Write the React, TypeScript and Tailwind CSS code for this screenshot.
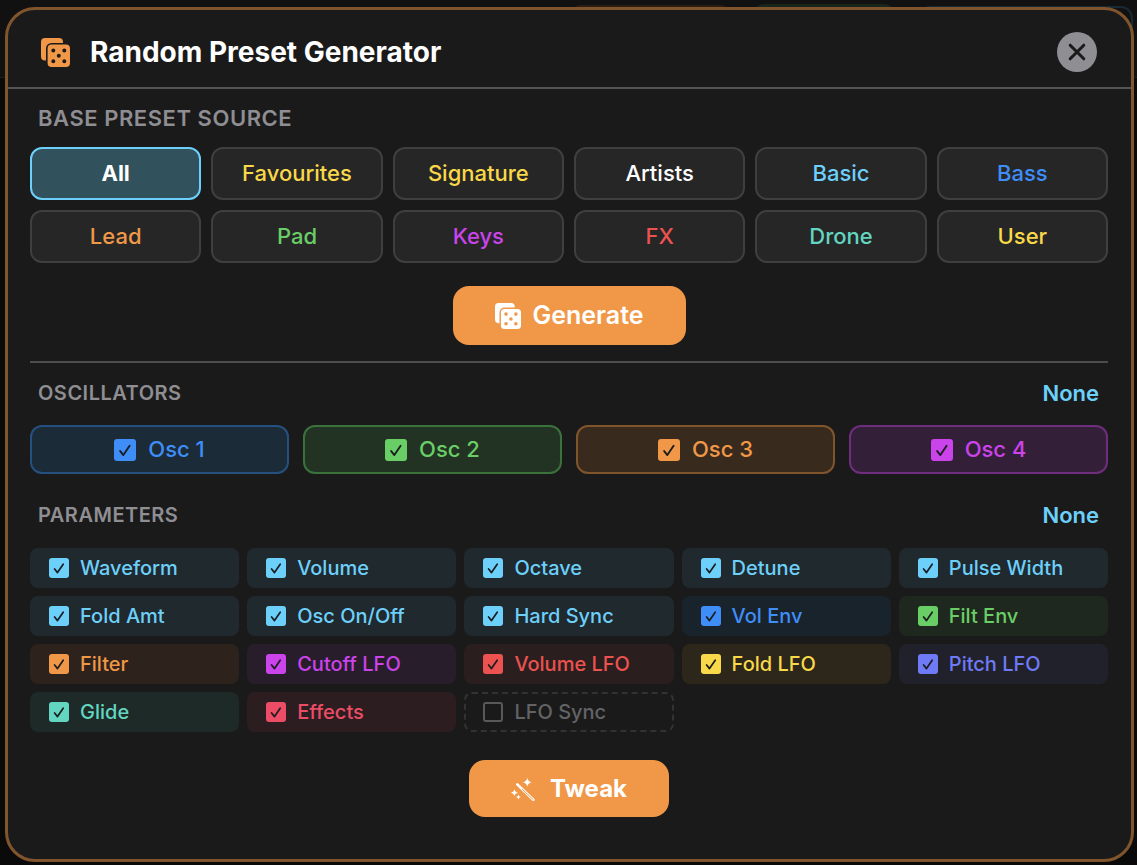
import React, { useState } from 'react';
import clsx from 'clsx';

interface Category {
  name: string;
  color: string;
}

interface Option {
  name: string;
  text: string;
  check: string;
  box: string;
}

const categories: Category[] = [
  { name: 'All', color: 'text-white' },
  { name: 'Favourites', color: 'text-[#f9d849]' },
  { name: 'Signature', color: 'text-[#f9d849]' },
  { name: 'Artists', color: 'text-white' },
  { name: 'Basic', color: 'text-[#6dd0fa]' },
  { name: 'Bass', color: 'text-[#3f8ef7]' },
  { name: 'Lead', color: 'text-[#f09848]' },
  { name: 'Pad', color: 'text-[#6ace66]' },
  { name: 'Keys', color: 'text-[#cb43ea]' },
  { name: 'FX', color: 'text-[#ec524f]' },
  { name: 'Drone', color: 'text-[#63d6c1]' },
  { name: 'User', color: 'text-[#f9d849]' },
];

const oscillators: Option[] = [
  { name: 'Osc 1', text: 'text-[#3f8ef7]', check: 'checked:bg-[#3f8ef7]', box: 'bg-[#1b2b38] border-[#26507f]' },
  { name: 'Osc 2', text: 'text-[#6ace66]', check: 'checked:bg-[#6ace66]', box: 'bg-[#223324] border-[#3b723c]' },
  { name: 'Osc 3', text: 'text-[#f09848]', check: 'checked:bg-[#f09848]', box: 'bg-[#392a1e] border-[#80552b]' },
  { name: 'Osc 4', text: 'text-[#cb43ea]', check: 'checked:bg-[#cb43ea]', box: 'bg-[#341f38] border-[#6e2d7d]' },
];

const cyan = { text: 'text-[#6dd0fa]', check: 'checked:bg-[#6dd0fa]', box: 'bg-[#20292e]' };

const parameters: Option[] = [
  { name: 'Waveform', ...cyan },
  { name: 'Volume', ...cyan },
  { name: 'Octave', ...cyan },
  { name: 'Detune', ...cyan },
  { name: 'Pulse Width', ...cyan },
  { name: 'Fold Amt', ...cyan },
  { name: 'Osc On/Off', ...cyan },
  { name: 'Hard Sync', ...cyan },
  { name: 'Vol Env', text: 'text-[#3f8ef7]', check: 'checked:bg-[#3f8ef7]', box: 'bg-[#19232c]' },
  { name: 'Filt Env', text: 'text-[#6ace66]', check: 'checked:bg-[#6ace66]', box: 'bg-[#1f281f]' },
  { name: 'Filter', text: 'text-[#f09848]', check: 'checked:bg-[#f09848]', box: 'bg-[#2d231c]' },
  { name: 'Cutoff LFO', text: 'text-[#cb43ea]', check: 'checked:bg-[#cb43ea]', box: 'bg-[#281d2b]' },
  { name: 'Volume LFO', text: 'text-[#ec524f]', check: 'checked:bg-[#ec524f]', box: 'bg-[#2b1e1e]' },
  { name: 'Fold LFO', text: 'text-[#f9d849]', check: 'checked:bg-[#f9d849]', box: 'bg-[#2c271a]' },
  { name: 'Pitch LFO', text: 'text-[#6f7af6]', check: 'checked:bg-[#6f7af6]', box: 'bg-[#21212b]' },
  { name: 'Glide', text: 'text-[#63d6c1]', check: 'checked:bg-[#63d6c1]', box: 'bg-[#1d2a27]' },
  { name: 'Effects', text: 'text-[#ec4c66]', check: 'checked:bg-[#ec4c66]', box: 'bg-[#2b1d20]' },
  { name: 'LFO Sync', ...cyan },
];

const DiceIcon: React.FC<{ className: string }> = ({ className }) => (
  <svg viewBox="0 0 29 29" className={className} fill="currentColor" aria-hidden="true">
    <path d="M4 0H18A4 4 0 0 1 22 4V5H10.5A5.5 5.5 0 0 0 5 10.5V22.5H4A4 4 0 0 1 0 18.5V4A4 4 0 0 1 4 0Z" />
    <path
      fillRule="evenodd"
      d="M10.6 6.6H25A4 4 0 0 1 29 10.6V25A4 4 0 0 1 25 29H10.6A4 4 0 0 1 6.6 25V10.6A4 4 0 0 1 10.6 6.6Z
        M10.3 12.4a2 2 0 1 0 4 0a2 2 0 1 0 -4 0Z
        M21.3 12.4a2 2 0 1 0 4 0a2 2 0 1 0 -4 0Z
        M15.8 17.8a2 2 0 1 0 4 0a2 2 0 1 0 -4 0Z
        M10.3 23.2a2 2 0 1 0 4 0a2 2 0 1 0 -4 0Z
        M21.3 23.2a2 2 0 1 0 4 0a2 2 0 1 0 -4 0Z"
    />
  </svg>
);

const WandIcon: React.FC = () => (
  <svg viewBox="0 0 24 24" className="size-6 overflow-visible" fill="currentColor" aria-hidden="true">
    <path d="M16.3 .8Q16.9 4.7 20.8 5.3Q16.9 5.9 16.3 9.8Q15.7 5.9 11.8 5.3Q15.7 4.7 16.3 .8Z" />
    <path d="M3.4 12Q3.9 15.2 7 15.7Q3.9 16.2 3.4 19.4Q2.9 16.2 -.2 15.7Q2.9 15.2 3.4 12Z" />
    <path d="M7.4 17.6Q7.7 19.7 9.8 20Q7.7 20.3 7.4 22.4Q7.1 20.3 5 20Q7.1 19.7 7.4 17.6Z" />
    <path d="M6.3 7.4L22.3 22.8" stroke="currentColor" strokeWidth="2.7" strokeLinecap="round" />
    <path d="M11.5 12.4L22.1 22.6" stroke="#f09848" strokeWidth="1" strokeLinecap="round" />
  </svg>
);

const Checkbox: React.FC<{
  size: string;
  color: string;
  checked: boolean;
  onChange: () => void;
}> = ({ size, color, checked, onChange }) => (
  <span className={clsx('grid shrink-0 grid-cols-1 grid-rows-1', size)}>
    <input
      type="checkbox"
      checked={checked}
      onChange={onChange}
      className={clsx(
        'col-start-1 row-start-1 appearance-none rounded-[3px] border-2 border-[#59595b] checked:border-0',
        size,
        color
      )}
    />
    {checked && (
      <svg
        viewBox="0 0 20 20"
        className={clsx('pointer-events-none z-10 col-start-1 row-start-1', size)}
        fill="none"
        stroke="#1b1d20"
        strokeWidth="1.7"
        strokeLinecap="round"
        strokeLinejoin="round"
        aria-hidden="true"
      >
        <path d="M5.6 11L8.5 14.6L14.2 6.2" />
      </svg>
    )}
  </span>
);

const SectionHeader: React.FC<{ title: string; action: string; onAction: () => void }> = ({
  title,
  action,
  onAction,
}) => (
  <div className="flex items-center justify-between pr-[9px] pl-2">
    <h2 className="text-[20px] leading-7 font-semibold tracking-wide text-[#8e8e93] uppercase">{title}</h2>
    <button type="button" onClick={onAction} className="text-[22px] leading-7 font-semibold text-[#6dd0fa]">
      {action}
    </button>
  </div>
);

export default function App() {
  const [category, setCategory] = useState('All');
  const [enabledOscs, setEnabledOscs] = useState<string[]>(oscillators.map(o => o.name));
  const [enabledParams, setEnabledParams] = useState<string[]>(
    parameters.map(p => p.name).filter(name => name !== 'LFO Sync')
  );

  const toggle = (list: string[], name: string) =>
    list.includes(name) ? list.filter(n => n !== name) : [...list, name];

  return (
    <div className="relative isolate flex min-h-screen flex-col overflow-hidden bg-[#111111] pt-[7px] pr-[3px] pb-[3px] pl-[5px] font-['Inter','Liberation_Sans',sans-serif]">
      {/* Dimmed synth panels behind the dialog */}
      <div className="absolute inset-0 -z-10" aria-hidden="true">
        <div className="absolute inset-x-0 top-[77px] bottom-0 border-t border-[#1c1c1c] bg-[#0a0a0a]" />
        <div className="absolute top-[5px] left-[569px] h-10 w-[163px] rounded-xl bg-[#2b1d12]" />
        <div className="absolute top-1 left-[752px] h-10 w-[144px] rounded-xl bg-[#16261a]" />
        <div className="absolute top-1.5 right-1 left-[918px] h-10 rounded-xl border-2 border-[#182a33]" />
      </div>

      <div
        role="dialog"
        aria-labelledby="dialog-title"
        className="flex flex-1 flex-col rounded-[30px] border-3 border-[#80552d] bg-[#1a1a1a]"
      >
        {/* Header */}
        <header className="flex items-center justify-between border-b-2 border-[#545454] pt-[22px] pr-[34px] pb-[15px] pl-[33px]">
          <div className="flex items-center gap-5">
            <DiceIcon className="size-[29px] text-[#f09848]" />
            <h1 id="dialog-title" className="text-[28px] leading-10 font-bold text-white">
              Random Preset Generator
            </h1>
          </div>
          <button
            type="button"
            aria-label="Close"
            className="flex size-10 items-center justify-center rounded-full bg-[#8e8e93] text-[#1a1a1a]"
          >
            <svg viewBox="0 0 20 20" className="size-5" stroke="currentColor" strokeWidth="3" strokeLinecap="round">
              <path d="M3.2 3.2L16.8 16.8M16.8 3.2L3.2 16.8" />
            </svg>
          </button>
        </header>

        <div className="pt-[15px] pr-[23px] pb-10 pl-[22px]">
          {/* Base preset source */}
          <section>
            <h2 className="px-2 text-[22px] leading-7 font-semibold tracking-wide text-[#8e8e93] uppercase">
              Base Preset Source
            </h2>
            <div className="mt-[15px] grid grid-cols-6 gap-2.5">
              {categories.map(c => (
                <button
                  key={c.name}
                  type="button"
                  aria-pressed={category === c.name}
                  onClick={() => setCategory(c.name)}
                  className={clsx(
                    'h-[53px] rounded-xl border-2 text-[22px]',
                    c.color,
                    category === c.name
                      ? 'border-[#6dd0fa] bg-[#31515c] font-bold'
                      : 'border-[#3f3f3f] bg-[#262626] font-medium'
                  )}
                >
                  {c.name}
                </button>
              ))}
            </div>
          </section>

          <div className="mt-[23px] flex justify-center border-b-2 border-[#4d4d4d] pb-4">
            <button
              type="button"
              className="flex h-[59px] items-center gap-3 rounded-2xl bg-[#f09848] px-[42px] text-[25px] font-semibold text-white"
            >
              <DiceIcon className="size-[26px]" />
              Generate
            </button>
          </div>

          {/* Oscillators */}
          <section className="mt-4">
            <SectionHeader title="Oscillators" action="None" onAction={() => setEnabledOscs([])} />
            <div className="mt-[18px] grid grid-cols-4 gap-3.5">
              {oscillators.map(o => (
                <label
                  key={o.name}
                  className={clsx(
                    'flex h-[49px] items-center justify-center gap-3 rounded-xl border-2 text-[22px] font-medium',
                    o.text,
                    o.box
                  )}
                >
                  <Checkbox
                    size="size-[22px]"
                    color={o.check}
                    checked={enabledOscs.includes(o.name)}
                    onChange={() => setEnabledOscs(toggle(enabledOscs, o.name))}
                  />
                  {o.name}
                </label>
              ))}
            </div>
          </section>

          {/* Parameters */}
          <section className="mt-[27px]">
            <SectionHeader title="Parameters" action="None" onAction={() => setEnabledParams([])} />
            <div className="mt-[19px] grid grid-cols-5 gap-2">
              {parameters.map(p => {
                const enabled = enabledParams.includes(p.name);
                return (
                  <label
                    key={p.name}
                    className={clsx(
                      'flex h-10 items-center gap-[11px] rounded-lg text-xl font-medium',
                      enabled ? 'pl-[19px]' : 'border-2 border-dashed border-[#323232] pl-[17px] text-[#636365]',
                      enabled && p.text,
                      enabled && p.box
                    )}
                  >
                    <Checkbox
                      size="size-5"
                      color={p.check}
                      checked={enabled}
                      onChange={() => setEnabledParams(toggle(enabledParams, p.name))}
                    />
                    {p.name}
                  </label>
                );
              })}
            </div>
          </section>

          <div className="mt-7 flex justify-center">
            <button
              type="button"
              className="flex h-[57px] items-center gap-[15px] rounded-2xl bg-[#f09848] px-[42px] text-2xl font-bold text-white"
            >
              <WandIcon />
              Tweak
            </button>
          </div>
        </div>
      </div>
    </div>
  );
}
